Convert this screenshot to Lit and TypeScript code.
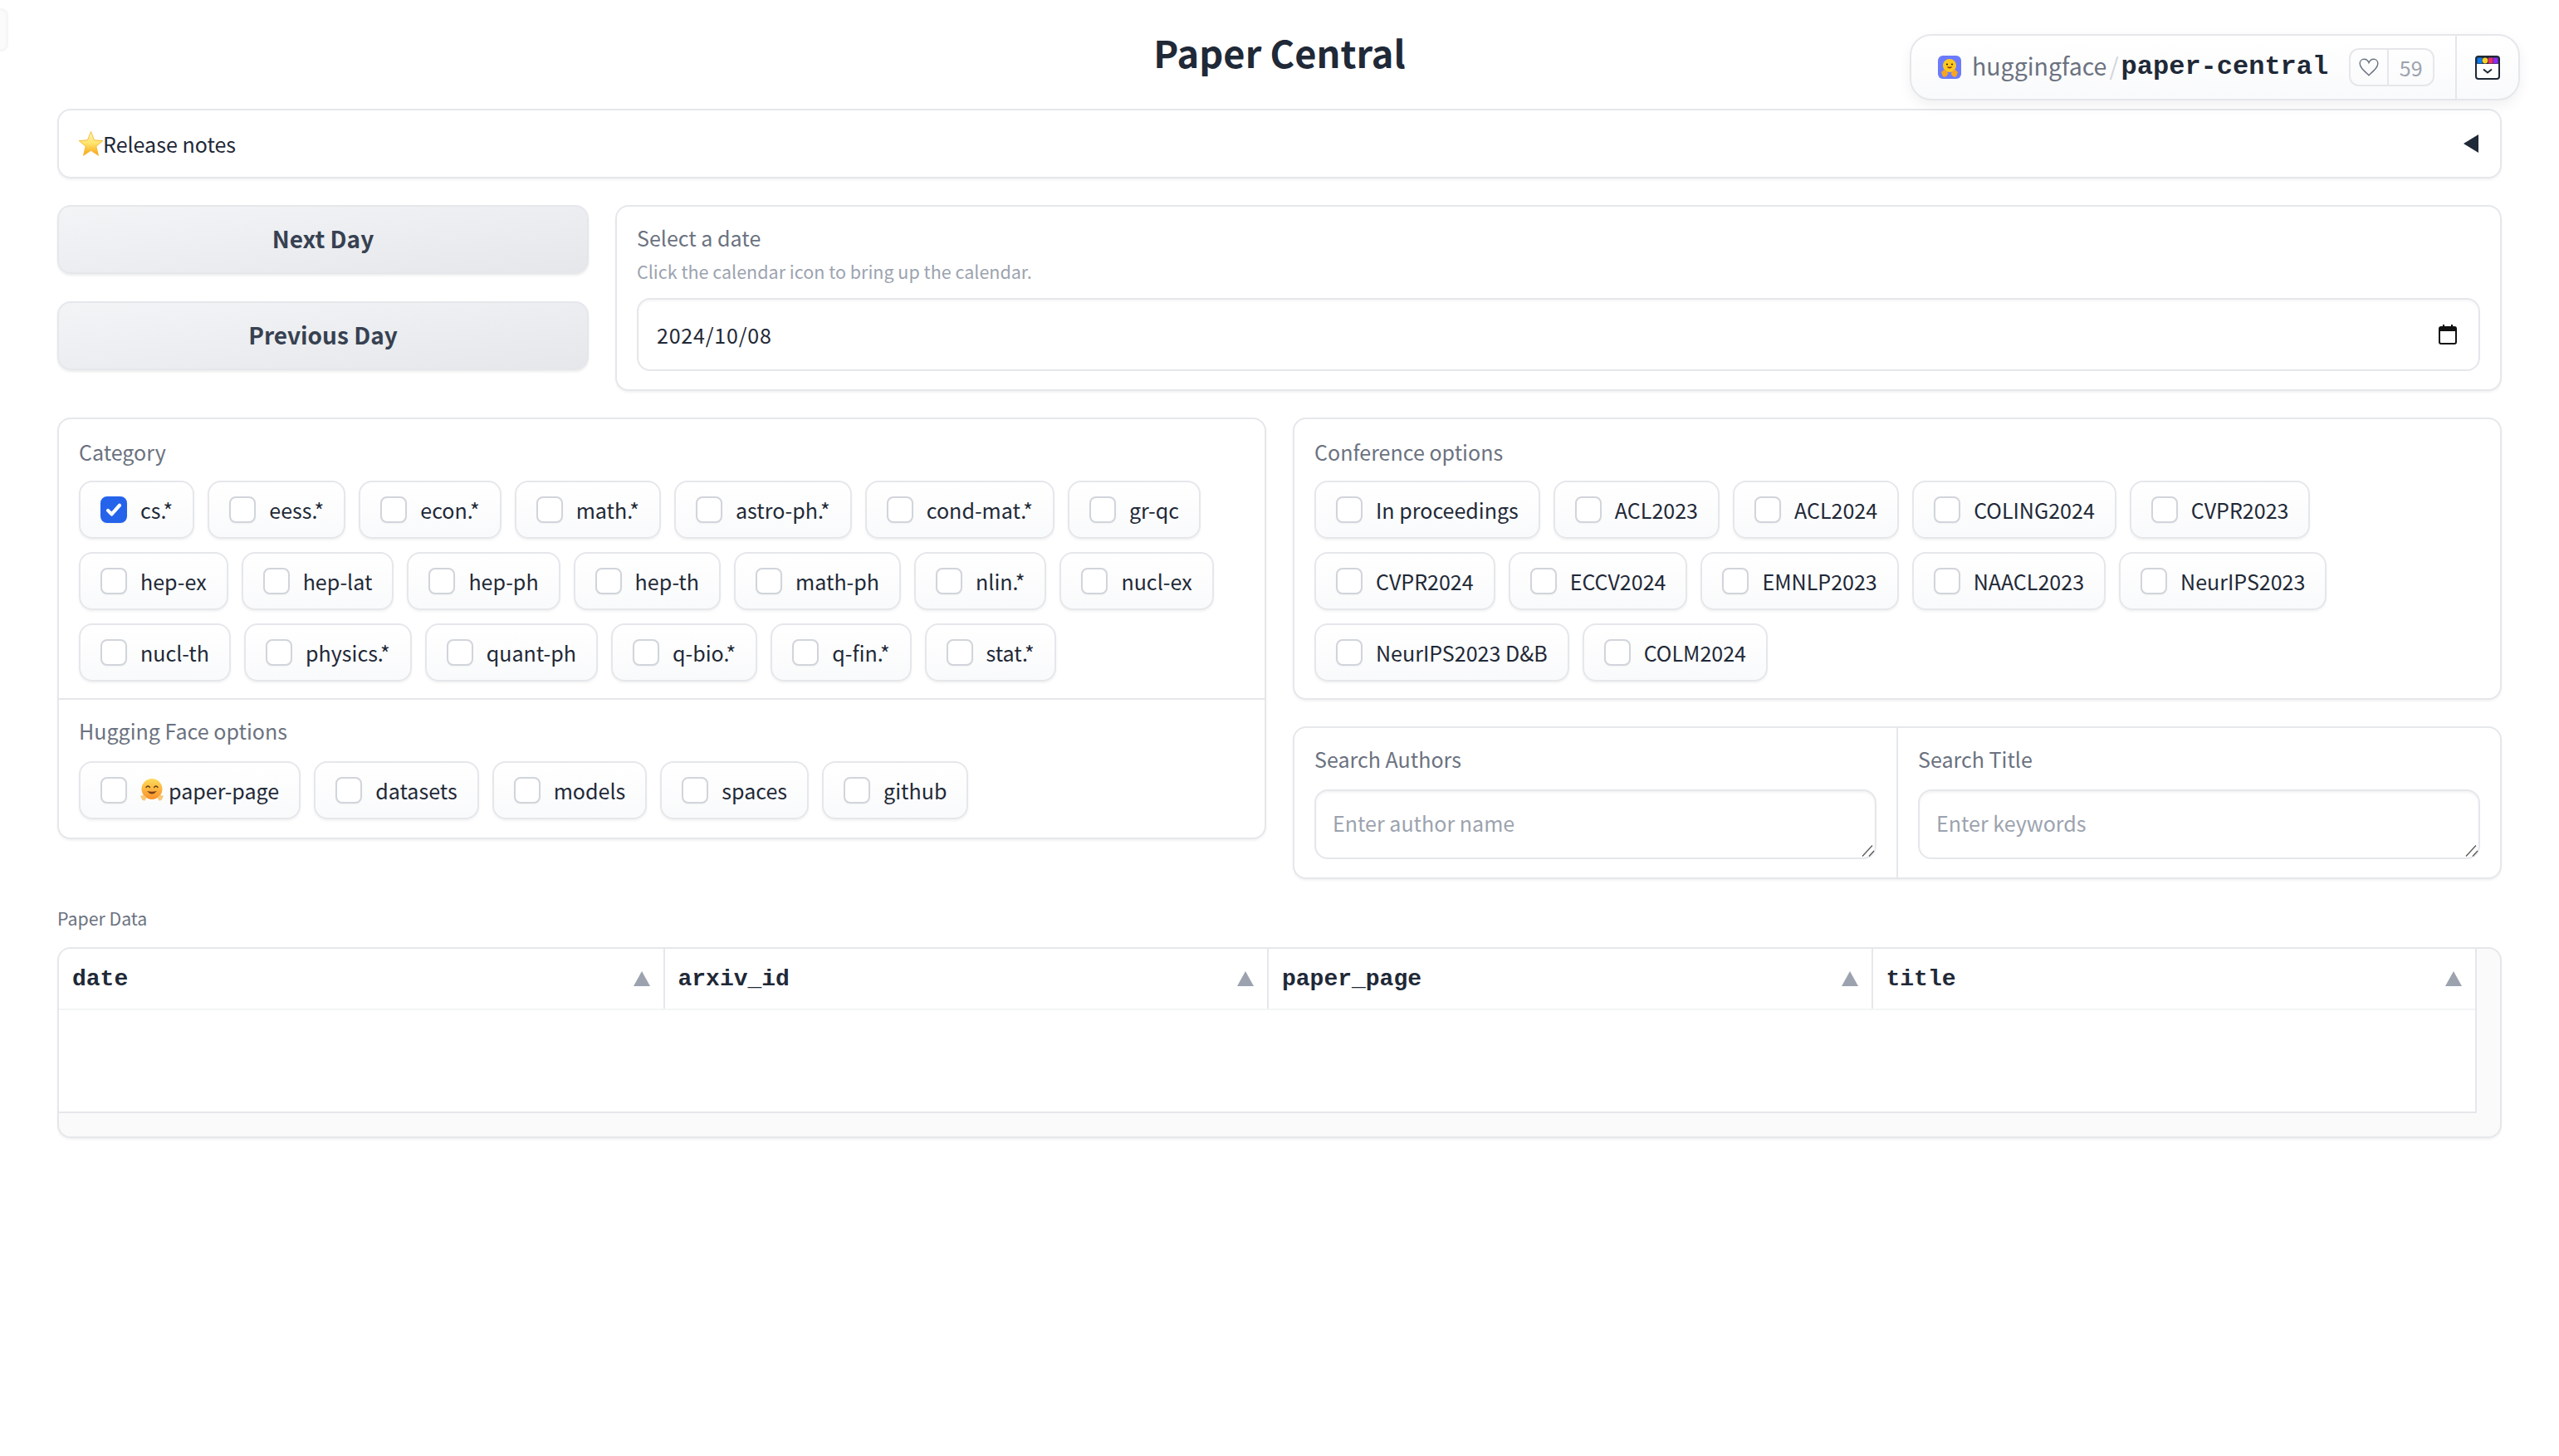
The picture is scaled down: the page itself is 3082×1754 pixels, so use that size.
import { LitElement, html, css } from "lit";
import { customElement } from "lit/decorators.js";

const CATS = ["cs.*","eess.*","econ.*","math.*","astro-ph.*","cond-mat.*","gr-qc","hep-ex","hep-lat","hep-ph","hep-th","math-ph","nlin.*","nucl-ex","nucl-th","physics.*","quant-ph","q-bio.*","q-fin.*","stat.*"];
const CONFS = ["In proceedings","ACL2023","ACL2024","COLING2024","CVPR2023","CVPR2024","ECCV2024","EMNLP2023","NAACL2023","NeurIPS2023","NeurIPS2023 D&B","COLM2024"];
const HF = ["paper-page","datasets","models","spaces","github"];
const COLS = ["date","arxiv_id","paper_page","title"];

const star = html`<svg class="star" viewBox="0 0 32 34"><defs><linearGradient id="sg" x1="0" y1="0" x2="0" y2="1"><stop offset="0" stop-color="#fff6c0"/><stop offset=".5" stop-color="#ffe36a"/><stop offset="1" stop-color="#f7a113"/></linearGradient></defs><path d="M16 1l4.400 11.400 11.400.8-8.800 7.400 2.900 12.200L16 26.200 6.100 32.800 9 20.600.2 13.200l11.400-.8z" fill="url(#sg)" stroke="#f5b52e" stroke-width="1"/></svg>`;
const hug = html`<svg class="hug" viewBox="0 0 28 28"><defs><linearGradient id="hg" x1="0" y1="0" x2="0" y2="1"><stop offset="0" stop-color="#fedc5a"/><stop offset="1" stop-color="#f8902a"/></linearGradient></defs><circle cx="14" cy="12.500" r="12.500" fill="url(#hg)"/><path d="M7 10.500q2.200-3 4.400 0M16.600 10.500q2.200-3 4.400 0" stroke="#5b3a10" stroke-width="1.300" fill="none" stroke-linecap="round"/><path d="M8 15q6 7 12 0q-6 1.500-12 0z" fill="#7a3f17"/><path d="M0 21l4-1.500 3.500 3.500-2 3.500-3-.5z" fill="#f6c878"/><path d="M28 21l-4-1.500-3.500 3.500 2 3.500 3-.5z" fill="#f6c878"/></svg>`;
const grip = html`<svg class="grip" viewBox="0 0 16 14"><path d="M1 13.500L13 .5M9 13.500L15 7" stroke="#555" stroke-width="1.200" fill="none"/></svg>`;

@customElement("app-root")
export class AppRoot extends LitElement {
  static styles = css`
    :host { display: block; font-family: "Noto Sans CJK SC", "Noto Sans", sans-serif; color: #1f2937; font-size: 25.050px; background: #fff; min-height: 1754px; position: relative; overflow: hidden; }
    * { box-sizing: border-box; }
    .ghost { position: absolute; left: -20px; top: 10px; width: 30px; height: 52px; border: 3px solid #f6f6f7; border-radius: 8px; background: #fbfbfb; }
    .badge { position: absolute; left: 2300px; top: 41px; width: 735px; height: 80px; display: flex; align-items: center; border: 2px solid #e5e7eb; border-radius: 26px; background: linear-gradient(to top, #f9fafb, #fff); box-shadow: 0 6px 16px rgba(0,0,0,.06); }
    .repo { flex: 1; display: flex; align-items: center; padding-left: 32px; height: 100%; white-space: nowrap; }
    .logo { width: 28px; height: 28px; margin-right: 13px; flex: none; }
    .org { font-size: 28.500px; color: #6b7280; line-height: 1; padding-bottom: 3px; }
    .slash { font-size: 28.500px; color: #d1d5db; margin: 0 3px; line-height: 1; padding-bottom: 3px; }
    .name { font-family: "Liberation Mono", monospace; font-weight: 700; font-size: 32px; color: #1f2937; line-height: 1; }
    .likes { display: flex; align-items: center; height: 46px; margin-left: 25px; border: 2px solid #e5e7eb; border-radius: 12px; color: #9ca3af; font-size: 25px; }
    .heart { width: 46px; height: 100%; display: flex; align-items: center; justify-content: center; border-right: 2px solid #e5e7eb; }
    .heart svg { width: 26px; height: 26px; }
    .count { width: 53px; text-align: center; line-height: 40px; }
    .apps { width: 76px; height: 100%; border-left: 2px solid #e5e7eb; display: flex; align-items: center; justify-content: center; }
    .apps svg { width: 30px; height: 29px; }

    main { padding: 0 69px; display: flex; flex-direction: column; gap: 32px; }
    h1 { margin: 0; height: 99px; padding-top: 33px; font-size: 45.200px; line-height: 60px; font-weight: 700; text-align: center; color: #1f2937; }
    .acc { height: 84px; border: 2px solid #e5e7eb; border-radius: 16px; display: flex; align-items: center; justify-content: space-between; padding: 0 26px 0 24px; box-shadow: 0 2px 3px rgba(0,0,0,.05); }
    .acc-l { display: flex; align-items: center; }
    .star { width: 29px; height: 32px; }
    .tri { width: 0; height: 0; border-style: solid; border-width: 11px 18px 11px 0; border-color: transparent #1f2937 transparent transparent; }

    .top { display: grid; grid-template-columns: 640px 1fr; gap: 32px; align-items: start; }
    .btns { display: flex; flex-direction: column; gap: 33px; }
    button { height: 83px; border: 2px solid #e5e7eb; border-radius: 16px; background: linear-gradient(to bottom right, #f3f4f6, #e5e7eb); font: 700 28px "Noto Sans CJK SC", sans-serif; color: #374151; box-shadow: 0 2px 3px rgba(0,0,0,.08); padding: 0 0 3px; }

    .block { border: 2px solid #e5e7eb; border-radius: 16px; background: #fff; box-shadow: 0 2px 3px rgba(0,0,0,.05); }
    .sec { padding: 20px 24px; }
    .sec + .sec { border-top: 2px solid #e5e7eb; }
    .date { padding: 18px 24px 22px; }
    .lbl { display: block; color: #6b7280; font-size: 25.050px; line-height: 38px; margin-bottom: 16px; }
    .lbl.dt { margin-bottom: 6px; }
    .info { color: #9ca3af; font-size: 21.500px; line-height: 32px; margin-bottom: 16px; }
    .input { height: 88px; border: 2px solid #e5e7eb; border-radius: 16px; display: flex; align-items: center; justify-content: space-between; padding: 0 26px 0 22px; font-size: 25px; letter-spacing: .8px; color: #1f2937; box-shadow: inset 0 2px 3px rgba(0,0,0,.04); }
    .input svg { width: 22px; height: 24px; }

    .mid { display: grid; grid-template-columns: 1fr 1fr; gap: 32px; align-items: start; }
    .rightcol { display: flex; flex-direction: column; gap: 32px; }
    .chips { display: flex; flex-wrap: wrap; gap: 16px; }
    .hfsec { padding: 18px 24px 22px; }
    .hfsec .lbl { margin-bottom: 18px; }
    .chip { display: inline-flex; align-items: center; height: 70px; padding: 0 24px; border: 2px solid #e5e7eb; border-radius: 16px; background: linear-gradient(to top, #f9fafb, #fff); box-shadow: 0 2px 3px rgba(0,0,0,.05); color: #1f2937; font-size: 25.050px; line-height: 40px; white-space: nowrap; }
    input[type=checkbox] { appearance: none; width: 32px; height: 32px; margin: 0 16px 0 0; border: 2px solid #d1d5db; border-radius: 8px; background: #fff; box-shadow: 0 1px 2px rgba(0,0,0,.04); flex: none; }
    input[type=checkbox]:checked { border-color: #2563eb; background: #2563eb url("data:image/svg+xml,%3Csvg xmlns='http://www.w3.org/2000/svg' viewBox='0 0 16 16'%3E%3Cpath d='M4 8.500l2.600 2.600L12 5' stroke='white' stroke-width='2.400' fill='none' stroke-linecap='round' stroke-linejoin='round'/%3E%3C/svg%3E") center/100% no-repeat; }
    .hug { width: 28px; height: 28px; margin-right: 6px; }

    .search { display: grid; grid-template-columns: calc(50% - 1px) 1fr; }
    .search .sec { padding: 18px 24px 22px; }
    .search .lbl { margin-bottom: 18px; }
    .search .sec + .sec { border-top: 0; border-left: 2px solid #e5e7eb; }
    .ta { position: relative; }
    textarea { display: block; width: 100%; height: 84px; border: 2px solid #e5e7eb; border-radius: 16px; padding: 18px 20px; font: 25.050px/40px "Noto Sans CJK SC", sans-serif; color: #1f2937; outline: none; box-shadow: inset 0 2px 3px rgba(0,0,0,.05); overflow: hidden; resize: none; }
    textarea::placeholder { color: #9ca3af; }
    .grip { position: absolute; right: 2px; bottom: 3px; width: 16px; height: 14px; }

    .data { display: flex; flex-direction: column; margin-top: -2px; }
    .dlbl { color: #6b7280; font-size: 21.300px; line-height: 34px; margin-bottom: 18px; }
    .table { height: 230px; border: 2px solid #e5e7eb; border-radius: 16px; background: #fafafa; overflow: hidden; box-shadow: 0 2px 3px rgba(0,0,0,.05); }
    .inner { width: calc(100% - 28px); height: 198px; background: #fff; border-right: 2px solid #e5e7eb; border-bottom: 2px solid #e5e7eb; }
    .head { display: grid; grid-template-columns: repeat(4, 1fr); height: 74px; border-bottom: 2px solid #f3f4f6; }
    .th { display: flex; align-items: center; justify-content: space-between; padding: 0 16px; font: 700 28px "Liberation Mono", monospace; color: #1f2937; }
    .th + .th { border-left: 2px solid #e5e7eb; }
    .sort { width: 0; height: 0; border-style: solid; border-width: 0 10px 18px 10px; border-color: transparent transparent #9ca3af transparent; }
  `;

  chip(label: string, checked = false, icon: unknown = null) {
    return html`<label class="chip"><input type="checkbox" .checked=${checked} />${icon}<span>${label}</span></label>`;
  }

  render() {
    return html`
      <div class="ghost"></div>
      <div class="badge">
        <div class="repo">
          <svg class="logo" viewBox="0 0 28 28"><rect width="28" height="28" rx="6" fill="#6b7bfb"/><circle cx="14" cy="12" r="8" fill="#ffc81f"/><path d="M4 20l4.500-4 4 6-3 3.500H6zM24 20l-4.500-4-4 6 3 3.500H22z" fill="#f9a51e"/><circle cx="11" cy="10.500" r="1.100" fill="#3a2a10"/><circle cx="17" cy="10.500" r="1.100" fill="#3a2a10"/><path d="M10.500 13.500q3.500 4 7 0z" fill="#8a3c14"/></svg>
          <span class="org">huggingface</span><span class="slash">/</span><span class="name">paper-central</span>
          <div class="likes">
            <div class="heart"><svg viewBox="0 0 24 24"><path d="M12 21C6 15.500 2 12 2 7.800 2 4.800 4.200 3 6.600 3 8.800 3 11 4.400 12 7c1-2.600 3.200-4 5.400-4C19.800 3 22 4.800 22 7.800 22 12 18 15.500 12 21z" fill="none" stroke="#6b7280" stroke-width="1.300"/></svg></div>
            <div class="count">59</div>
          </div>
        </div>
        <div class="apps">
          <svg viewBox="0 0 30 29"><rect x="1" y="1" width="28" height="27" rx="3" fill="#fff" stroke="#1f2937" stroke-width="2"/><rect x="1" y="1" width="28" height="9" rx="2" fill="#1f2937"/><rect x="2.500" y="2.500" width="6" height="7" fill="#0a7cf0"/><circle cx="12" cy="6" r="3.400" fill="#fbcf24"/><rect x="16" y="2.500" width="5.500" height="7" fill="#ec2d6c"/><rect x="22" y="2.500" width="5.500" height="7" fill="#8b2cf5"/><path d="M10 16.500l5 4 5-4" stroke="#1f2937" stroke-width="2" fill="none"/></svg>
        </div>
      </div>
      <main>
        <h1>Paper Central</h1>
        <div class="acc">
          <div class="acc-l">${star}<span>Release notes</span></div>
          <div class="tri"></div>
        </div>
        <div class="top">
          <div class="btns"><button>Next Day</button><button>Previous Day</button></div>
          <div class="block date">
            <span class="lbl dt">Select a date</span>
            <div class="info">Click the calendar icon to bring up the calendar.</div>
            <div class="input"><span>2024/10/08</span>
              <svg viewBox="0 0 22 24"><rect x="1" y="3" width="20" height="20" rx="2" fill="none" stroke="#111" stroke-width="2"/><path d="M1 3h20v5H1zM5 0h2v4H5zM15 0h2v4h-2z" fill="#111"/></svg>
            </div>
          </div>
        </div>
        <div class="mid">
          <div class="block">
            <div class="sec"><span class="lbl">Category</span><div class="chips">${CATS.map((c, i) => this.chip(c, i === 0))}</div></div>
            <div class="sec hfsec"><span class="lbl">Hugging Face options</span><div class="chips">${HF.map((c, i) => this.chip(c, false, i === 0 ? hug : null))}</div></div>
          </div>
          <div class="rightcol">
            <div class="block sec"><span class="lbl">Conference options</span><div class="chips">${CONFS.map((c) => this.chip(c))}</div></div>
            <div class="block search">
              <div class="sec"><span class="lbl">Search Authors</span><div class="ta"><textarea placeholder="Enter author name"></textarea>${grip}</div></div>
              <div class="sec"><span class="lbl">Search Title</span><div class="ta"><textarea placeholder="Enter keywords"></textarea>${grip}</div></div>
            </div>
          </div>
        </div>
        <div class="data">
          <div class="dlbl">Paper Data</div>
          <div class="table"><div class="inner"><div class="head">${COLS.map((c) => html`<div class="th"><span>${c}</span><span class="sort"></span></div>`)}</div></div></div>
        </div>
      </main>
    `;
  }
}
